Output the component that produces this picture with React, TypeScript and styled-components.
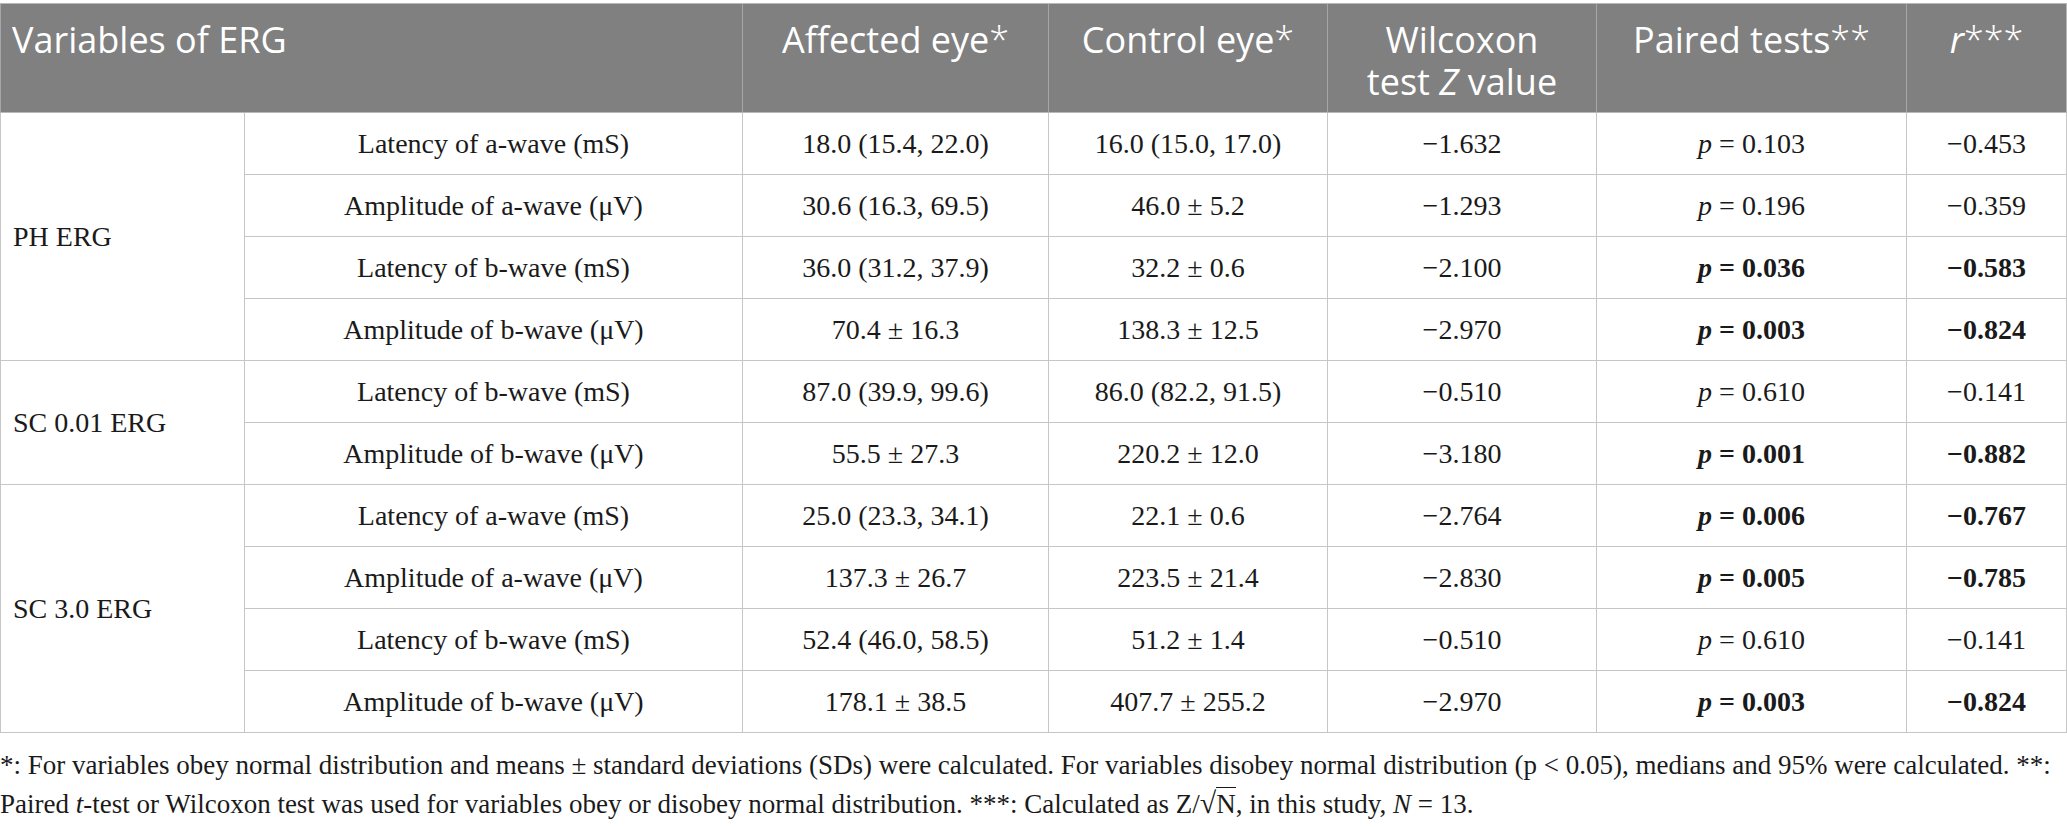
import React from 'react';
import styled, { createGlobalStyle } from 'styled-components';

const GlobalStyle = createGlobalStyle`
  html, body {
    margin: 0;
    padding: 0;
    background: #fff;
  }
`;

type Row = {
  label: string;
  affected: string;
  control: string;
  z: string;
  p: string;
  r: string;
  sig?: boolean;
};

type Group = {
  name: string;
  rows: Row[];
};

const groups: Group[] = [
  {
    name: 'PH ERG',
    rows: [
      { label: 'Latency of a-wave (mS)', affected: '18.0 (15.4, 22.0)', control: '16.0 (15.0, 17.0)', z: '−1.632', p: '0.103', r: '−0.453' },
      { label: 'Amplitude of a-wave (μV)', affected: '30.6 (16.3, 69.5)', control: '46.0 ± 5.2', z: '−1.293', p: '0.196', r: '−0.359' },
      { label: 'Latency of b-wave (mS)', affected: '36.0 (31.2, 37.9)', control: '32.2 ± 0.6', z: '−2.100', p: '0.036', r: '−0.583', sig: true },
      { label: 'Amplitude of b-wave (μV)', affected: '70.4 ± 16.3', control: '138.3 ± 12.5', z: '−2.970', p: '0.003', r: '−0.824', sig: true },
    ],
  },
  {
    name: 'SC 0.01 ERG',
    rows: [
      { label: 'Latency of b-wave (mS)', affected: '87.0 (39.9, 99.6)', control: '86.0 (82.2, 91.5)', z: '−0.510', p: '0.610', r: '−0.141' },
      { label: 'Amplitude of b-wave (μV)', affected: '55.5 ± 27.3', control: '220.2 ± 12.0', z: '−3.180', p: '0.001', r: '−0.882', sig: true },
    ],
  },
  {
    name: 'SC 3.0 ERG',
    rows: [
      { label: 'Latency of a-wave (mS)', affected: '25.0 (23.3, 34.1)', control: '22.1 ± 0.6', z: '−2.764', p: '0.006', r: '−0.767', sig: true },
      { label: 'Amplitude of a-wave (μV)', affected: '137.3 ± 26.7', control: '223.5 ± 21.4', z: '−2.830', p: '0.005', r: '−0.785', sig: true },
      { label: 'Latency of b-wave (mS)', affected: '52.4 (46.0, 58.5)', control: '51.2 ± 1.4', z: '−0.510', p: '0.610', r: '−0.141' },
      { label: 'Amplitude of b-wave (μV)', affected: '178.1 ± 38.5', control: '407.7 ± 255.2', z: '−2.970', p: '0.003', r: '−0.824', sig: true },
    ],
  },
];

const colWidths = [244, 498, 306, 279, 269, 310, 160];

function App() {
  return (
    <Page>
      <GlobalStyle />
      <Table>
        <colgroup>
          {colWidths.map((w, i) => (
            <col key={i} style={{ width: w }} />
          ))}
        </colgroup>
        <thead>
          <tr>
            <HeadCell colSpan={2} $align="left">
              {'Variables of ERG'}
            </HeadCell>
            <HeadCell>
              {'Affected eye'}
              <Star>{'*'}</Star>
            </HeadCell>
            <HeadCell>
              {'Control eye'}
              <Star>{'*'}</Star>
            </HeadCell>
            <HeadCell>
              <HeadLine>{'Wilcoxon'}</HeadLine>
              <HeadLine>
                {'test '}
                <i>{'Z'}</i>
                {' value'}
              </HeadLine>
            </HeadCell>
            <HeadCell>
              {'Paired tests'}
              <Star>{'**'}</Star>
            </HeadCell>
            <HeadCell>
              <i>{'r'}</i>
              <Star>{'***'}</Star>
            </HeadCell>
          </tr>
        </thead>
        <tbody>
          {groups.map((group) =>
            group.rows.map((row, idx) => (
              <tr key={group.name + idx}>
                {idx === 0 && (
                  <GroupCell rowSpan={group.rows.length}>{group.name}</GroupCell>
                )}
                <BodyCell>{row.label}</BodyCell>
                <BodyCell>{row.affected}</BodyCell>
                <BodyCell>{row.control}</BodyCell>
                <BodyCell>{row.z}</BodyCell>
                <BodyCell $bold={row.sig}>
                  <i>{'p'}</i>
                  {' = ' + row.p}
                </BodyCell>
                <BodyCell $bold={row.sig}>{row.r}</BodyCell>
              </tr>
            ))
          )}
        </tbody>
      </Table>
      <Footnote>
        {
          '*: For variables obey normal distribution and means ± standard deviations (SDs) were calculated. For variables disobey normal distribution (p < 0.05), medians and 95% were calculated. **: '
        }
        <br />
        {'Paired '}
        <i>{'t'}</i>
        {
          '-test or Wilcoxon test was used for variables obey or disobey normal distribution. ***: Calculated as Z/'
        }
        <Radical>{'√'}</Radical>
        <Radicand>{'N'}</Radicand>
        {', in this study, '}
        <i>{'N'}</i>
        {' = 13.'}
      </Footnote>
    </Page>
  );
}

export default App;

const Page = styled.div`
  width: 2067px;
  padding-top: 3px;
  font-family: 'Liberation Serif', 'Times New Roman', serif;
  color: #1a1a1a;
`;

const Table = styled.table`
  width: 2066px;
  table-layout: fixed;
  border-collapse: collapse;
  border: 1px solid #b8b8b8;
`;

const HeadCell = styled.th<{ $align?: 'left' | 'center' }>`
  background: #808080;
  color: #ffffff;
  font-family: 'Open Sans', 'Noto Sans', sans-serif;
  font-weight: 400;
  font-size: 36px;
  line-height: 42px;
  text-align: ${(p) => p.$align ?? 'center'};
  vertical-align: top;
  padding: 15px 14px 5px ${(p) => (p.$align === 'left' ? '11px' : '14px')};
  height: 88px;
  border-left: 1px solid #a6a6a6;
  border-top: 1px solid #b8b8b8;
  border-bottom: 1px solid #b8b8b8;

  i {
    font-style: italic;
  }
`;

const HeadLine = styled.span`
  display: block;
  height: 42px;
`;

const Star = styled.span`
  font-weight: 300;
`;

const BodyCell = styled.td<{ $bold?: boolean }>`
  height: 61px;
  padding: 0 10px;
  text-align: center;
  vertical-align: middle;
  font-size: 28px;
  font-weight: ${(p) => (p.$bold ? 700 : 400)};
  border: 1px solid #c6c6c6;
  white-space: nowrap;
`;

const GroupCell = styled.td`
  padding: 0 12px;
  text-align: left;
  vertical-align: middle;
  font-size: 28px;
  border: 1px solid #c6c6c6;
`;

const Footnote = styled.p`
  margin: 14px 0 0 0;
  font-size: 27px;
  line-height: 37px;
  white-space: nowrap;
`;

const Radical = styled.span`
  font-size: 30px;
`;

const Radicand = styled.span`
  border-top: 1.5px solid #1a1a1a;
  line-height: 1;
  padding-top: 1px;
`;
